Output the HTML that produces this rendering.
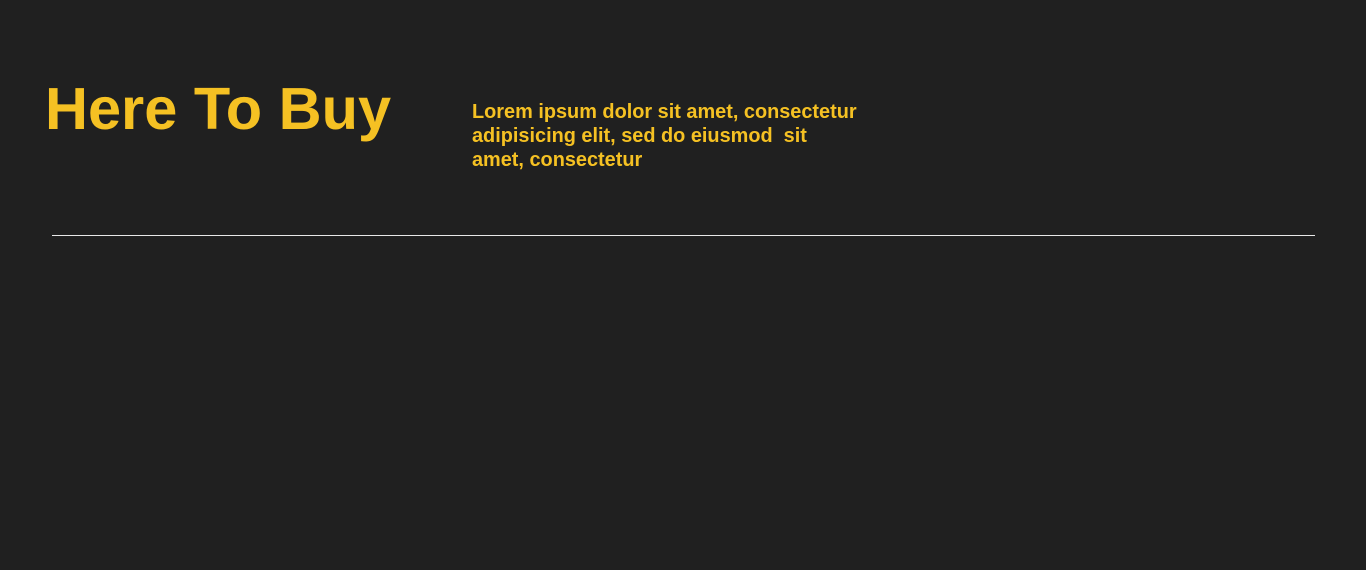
<!DOCTYPE html>
<html><head><style>
html,body{margin:0;padding:0;background:#202020;width:1366px;height:570px;overflow:hidden;}
body{position:relative;font-family:"Liberation Sans",Arial,sans-serif;font-weight:bold;color:#f5c123;}
h1{position:absolute;left:45px;top:74px;margin:0;font-size:59.5px;line-height:70px;font-weight:bold;}
p{position:absolute;left:472px;top:100px;margin:0;font-size:19.9px;line-height:24px;width:460px;}
.hr{position:absolute;left:52px;top:235px;width:1263px;height:1px;background:#e8e8e8;}
</style></head><body>
<h1>Here To Buy</h1>
<p>Lorem ipsum dolor sit amet, consectetur<br>adipisicing elit, sed do eiusmod&nbsp; sit<br>amet, consectetur</p>
<div class="hr"></div>
</body></html>
